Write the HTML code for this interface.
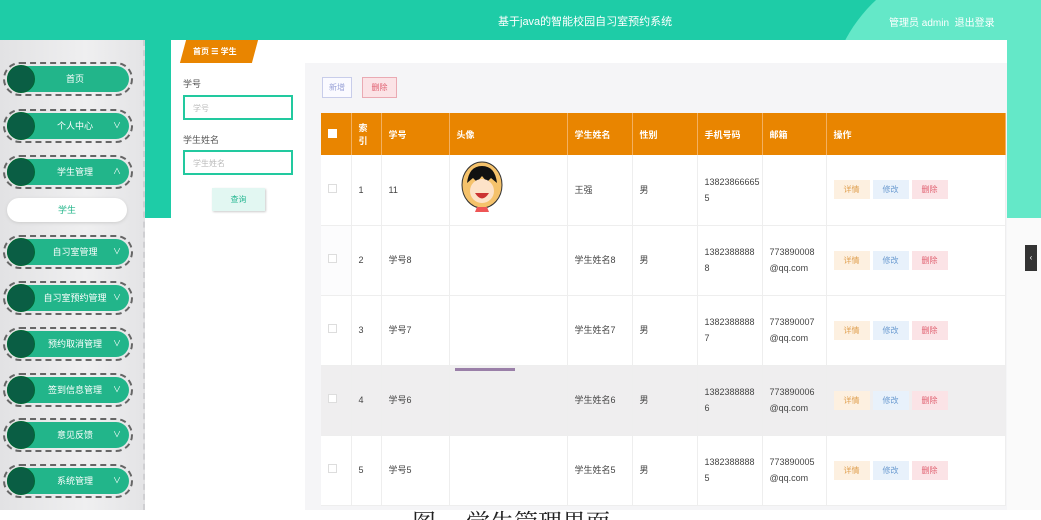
<!DOCTYPE html>
<html><head><meta charset="utf-8"><style>
*{margin:0;padding:0;box-sizing:border-box}
html,body{width:1041px;height:520px;overflow:hidden}
body{background:#fff;font-family:"Liberation Sans","Noto Sans CJK SC",sans-serif;position:relative}
.abs{position:absolute}
.top{left:0;top:0;width:1041px;height:40px;background:#1ecca7}
.side{left:0;top:40px;width:145px;height:470px;background:linear-gradient(90deg,#e2e2e4,#efeff0 60%,#e4e4e6);border-right:2px dashed #cfcfd2}
.pill{position:absolute;left:3px;width:130px;height:34px;border:2px dashed #666;border-radius:17px;padding:2px}
.pill .in{width:100%;height:100%;background:#22b58a;border-radius:14px;position:relative;color:#fff;font-size:9px;text-align:center;line-height:26px;padding-left:14px}
.pill .c{position:absolute;left:0;top:-1px;width:28px;height:28px;border-radius:50%;background:#0a5e44;border:1px solid #063;}
.pill .ar{position:absolute;right:8px;top:0;font-size:8px}
th,td{border-right:1px solid #eee;font-size:9px;text-align:left;padding-left:7px}
table{border-collapse:collapse;position:absolute;left:321px;top:113px;width:685px}
th{background:#e98500;color:#fff;height:42px;border-right:1px solid #f3b060;font-weight:bold}
td{height:70px;color:#444;border-bottom:1px solid #eee;background:#fff;line-height:16px}
tr.g td{background:#efeeef}
.b{display:inline-block;width:36px;height:19px;line-height:19px;text-align:center;font-size:8px;margin-right:3px}
.b1{background:#fdf0e0;color:#e0a050}.b2{background:#e8f1fb;color:#6a9ad0}.b3{background:#fbe3e6;color:#e06070}
.cb{display:inline-block;width:9px;height:9px;border:1px solid #ddd;background:#fff}
</style></head><body>
<div class="abs top"></div>
<div class="abs" style="left:1007px;top:40px;width:34px;height:178px;background:#33d8b3"></div>
<div class="abs" style="left:828px;top:-40px;width:300px;height:300px;border-radius:50%;background:#64e8c8"></div>
<div class="abs" style="left:1007px;top:218px;width:34px;height:292px;background:#fafafa"></div>
<div class="abs" style="left:498px;top:13px;color:#fff;font-size:11px">基于java的智能校园自习室预约系统</div>
<div class="abs" style="left:889px;top:14px;color:#fff;font-size:10px">管理员 admin &nbsp;退出登录</div>
<div class="abs" style="left:145px;top:40px;width:26px;height:178px;background:#1ecca7"></div>
<div class="abs side"></div>
<div class="pill" style="top:62px"><div class="in"><div class="c"></div>首页</div></div>
<div class="pill" style="top:109px"><div class="in"><div class="c"></div>个人中心<span class="ar">∨</span></div></div>
<div class="pill" style="top:155px"><div class="in"><div class="c"></div>学生管理<span class="ar">∧</span></div></div>
<div class="abs" style="left:7px;top:198px;width:120px;height:24px;border-radius:12px;background:#fff;color:#22b58a;font-size:9px;text-align:center;line-height:24px;box-shadow:0 1px 3px #ccc">学生</div>
<div class="pill" style="top:235px"><div class="in"><div class="c"></div>自习室管理<span class="ar">∨</span></div></div>
<div class="pill" style="top:281px"><div class="in"><div class="c"></div>自习室预约管理<span class="ar">∨</span></div></div>
<div class="pill" style="top:327px"><div class="in"><div class="c"></div>预约取消管理<span class="ar">∨</span></div></div>
<div class="pill" style="top:373px"><div class="in"><div class="c"></div>签到信息管理<span class="ar">∨</span></div></div>
<div class="pill" style="top:418px"><div class="in"><div class="c"></div>意见反馈<span class="ar">∨</span></div></div>
<div class="pill" style="top:464px"><div class="in"><div class="c"></div>系统管理<span class="ar">∨</span></div></div>
<div class="abs" style="left:171px;top:40px;width:836px;height:470px;background:#f5f5f7"></div>
<div class="abs" style="left:171px;top:40px;width:836px;height:23px;background:#fff"></div>
<div class="abs" style="left:183px;top:40px;width:72px;height:23px;background:#e98500;transform:skewX(-15deg)"></div>
<div class="abs" style="left:193px;top:46px;color:#fff;font-size:8px;font-weight:bold">首页 ☰ 学生</div>
<div class="abs" style="left:171px;top:63px;width:134px;height:447px;background:#fff"></div>
<div class="abs" style="left:183px;top:77px;font-size:9px;color:#555">学号</div>
<div class="abs" style="left:183px;top:95px;width:110px;height:25px;border:2px solid #22c99f;font-size:8px;color:#bbb;padding:6px 8px">学号</div>
<div class="abs" style="left:183px;top:133px;font-size:9px;color:#555">学生姓名</div>
<div class="abs" style="left:183px;top:150px;width:110px;height:25px;border:2px solid #22c99f;font-size:8px;color:#bbb;padding:6px 8px">学生姓名</div>
<div class="abs" style="left:212px;top:188px;width:53px;height:23px;background:#e2f7f2;color:#2ab894;font-size:8px;text-align:center;line-height:23px;box-shadow:1px 1px 2px #ccc">查询</div>
<div class="abs" style="left:322px;top:77px;width:30px;height:21px;border:1px solid #c8cdea;color:#9aa3d8;font-size:8px;text-align:center;line-height:19px;background:#fafaff">新增</div>
<div class="abs" style="left:362px;top:77px;width:35px;height:21px;border:1px solid #eaaab3;color:#e06070;font-size:8px;text-align:center;line-height:19px;background:#fbe3e6">删除</div>
<table>
<tr><th style="width:30px"><span class="cb" style="border-color:#fff"></span></th><th style="width:30px">索<br>引</th><th style="width:68px">学号</th><th style="width:118px">头像</th><th style="width:65px">学生姓名</th><th style="width:65px">性别</th><th style="width:65px">手机号码</th><th style="width:64px">邮箱</th><th>操作</th></tr>
<tr><td><span class="cb"></span></td><td>1</td><td>11</td><td><svg width="50" height="58" viewBox="0 0 50 58"><ellipse cx="25" cy="27" rx="20" ry="23" fill="#f5c26b" stroke="#333"/><path d="M10 25 Q12 8 25 8 Q38 8 40 25 L34 20 L30 24 L25 18 L20 24 L16 20Z" fill="#111"/><ellipse cx="25" cy="33" rx="12" ry="12" fill="#fde2c8"/><path d="M18 35 Q25 46 32 35Z" fill="#c33"/><path d="M18 54 L32 54 L30 49 L20 49Z" fill="#e55"/></svg></td><td>王强</td><td>男</td><td>13823866665<br>5</td><td></td><td><span class="b b1">详情</span><span class="b b2">修改</span><span class="b b3">删除</span></td></tr>
<tr><td style="background:#fcfcfd"><span class="cb"></span></td><td>2</td><td>学号8</td><td></td><td>学生姓名8</td><td>男</td><td>1382388888<br>8</td><td>773890008<br>@qq.com</td><td><span class="b b1">详情</span><span class="b b2">修改</span><span class="b b3">删除</span></td></tr>
<tr><td><span class="cb"></span></td><td>3</td><td>学号7</td><td></td><td>学生姓名7</td><td>男</td><td>1382388888<br>7</td><td>773890007<br>@qq.com</td><td><span class="b b1">详情</span><span class="b b2">修改</span><span class="b b3">删除</span></td></tr>
<tr class="g"><td><span class="cb"></span></td><td>4</td><td>学号6</td><td style="position:relative"><div class="abs" style="left:5px;top:2px;width:60px;height:3px;background:#9a7fa8"></div></td><td>学生姓名6</td><td>男</td><td>1382388888<br>6</td><td>773890006<br>@qq.com</td><td><span class="b b1">详情</span><span class="b b2">修改</span><span class="b b3">删除</span></td></tr>
<tr><td><span class="cb"></span></td><td>5</td><td>学号5</td><td></td><td>学生姓名5</td><td>男</td><td>1382388888<br>5</td><td>773890005<br>@qq.com</td><td><span class="b b1">详情</span><span class="b b2">修改</span><span class="b b3">删除</span></td></tr>
</table>
<div class="abs" style="left:1025px;top:245px;width:12px;height:26px;background:#333;color:#fff;font-size:8px;line-height:26px;text-align:center">‹</div>
<div class="abs" style="left:0;top:510px;width:1041px;height:10px;background:#fff"></div>
<div class="abs" style="left:412px;top:512px;font-size:24px;color:#222;font-family:'Liberation Serif','Noto Serif CJK SC',serif;line-height:24px;white-space:nowrap">图 &nbsp;&nbsp;&nbsp;&nbsp;学生管理界面</div>
</body></html>
